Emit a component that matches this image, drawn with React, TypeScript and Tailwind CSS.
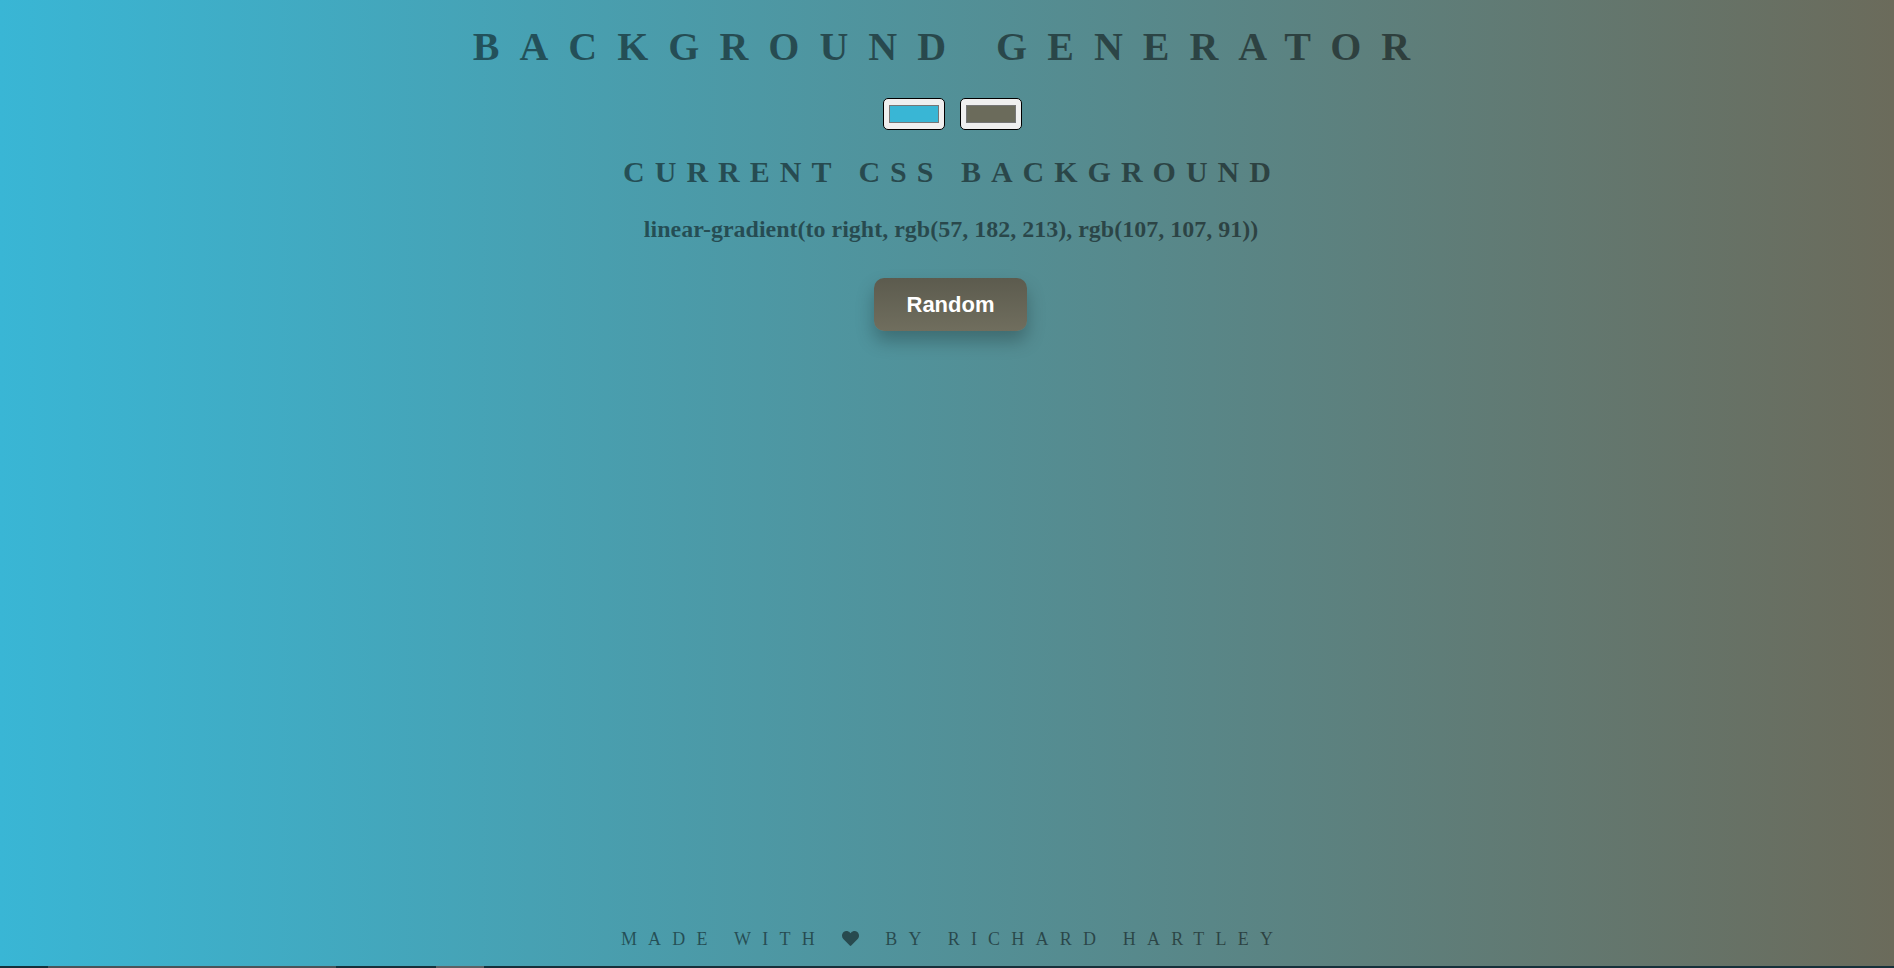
import React from 'react';

const serif = "font-['Liberation_Serif','Times_New_Roman',serif]";

const Swatch: React.FC<{ color: string }> = ({ color }) => (
  <div className="w-[62px] h-[32px] rounded-[5px] border border-black bg-[#efefef] px-[5px] py-[6px]">
    <div className="w-full h-full border border-[#767676]" style={{ backgroundColor: color }} />
  </div>
);

const Heart = () => (
  <svg viewBox="0 0 512 448" className="inline-block w-[17px] h-[15px] mr-[11px] align-[-1px] fill-current">
    <path d="M462.3 30.6C407.5-16.1 326-7.7 275.7 44.2L256 64.5l-19.7-20.3C186.1-7.7 104.5-16.1 49.7 30.6c-62.8 53.6-66.1 149.8-9.9 207.9l193.5 199.8c12.5 12.9 32.8 12.9 45.3 0l193.5-199.8c56.3-58.1 53-154.3-9.8-207.9z" />
  </svg>
);

export default function App() {
  const left = 'rgb(57, 182, 213)';
  const right = 'rgb(107, 107, 91)';

  return (
    <div className="relative h-[968px] w-full overflow-hidden flex flex-col items-center bg-[linear-gradient(to_right,#39b6d5,#6b6b5b)] text-black/50 text-center">
      <h1 className={`${serif} mt-[24px] text-[40px] leading-[46px] font-bold uppercase tracking-[0.5em] pl-[9px]`}>
        Background Generator
      </h1>

      <div className="mt-[28px] ml-[10px] flex items-center gap-[15px]">
        <Swatch color="#39b6d5" />
        <Swatch color="#6b6b5b" />
      </div>

      <h3 className={`${serif} mt-[25px] text-[30px] leading-[34px] font-bold uppercase tracking-[10px] pl-[10px]`}>
        Current CSS Background
      </h3>

      <p className={`${serif} mt-[27px] ml-[8px] text-[24px] leading-[27px] font-bold`}>
        linear-gradient(to right, {left}, {right})
      </p>

      <button className="mt-[35px] ml-[7px] w-[153px] h-[53px] rounded-[10px] bg-[linear-gradient(to_bottom,#5c5b4e,#706e5e)] shadow-[0_10px_18px_rgba(0,0,0,0.25)] text-white font-['Liberation_Sans',Arial,sans-serif] font-bold text-[22px]">
        Random
      </button>

      <footer className={`${serif} mt-auto mb-[18px] text-[18px] leading-[21px] uppercase tracking-[11.2px] pl-[11px]`}>
        Made with <Heart /> by Richard Hartley
      </footer>

      <div className="absolute left-0 right-0 bottom-0 h-[2px] bg-[#16303a]">
        <div className="absolute left-[48px] w-[288px] top-0 h-[2px] bg-[#4a5459]" />
        <div className="absolute left-[436px] w-[48px] top-0 h-[2px] bg-[#5b6266]" />
      </div>
    </div>
  );
}
